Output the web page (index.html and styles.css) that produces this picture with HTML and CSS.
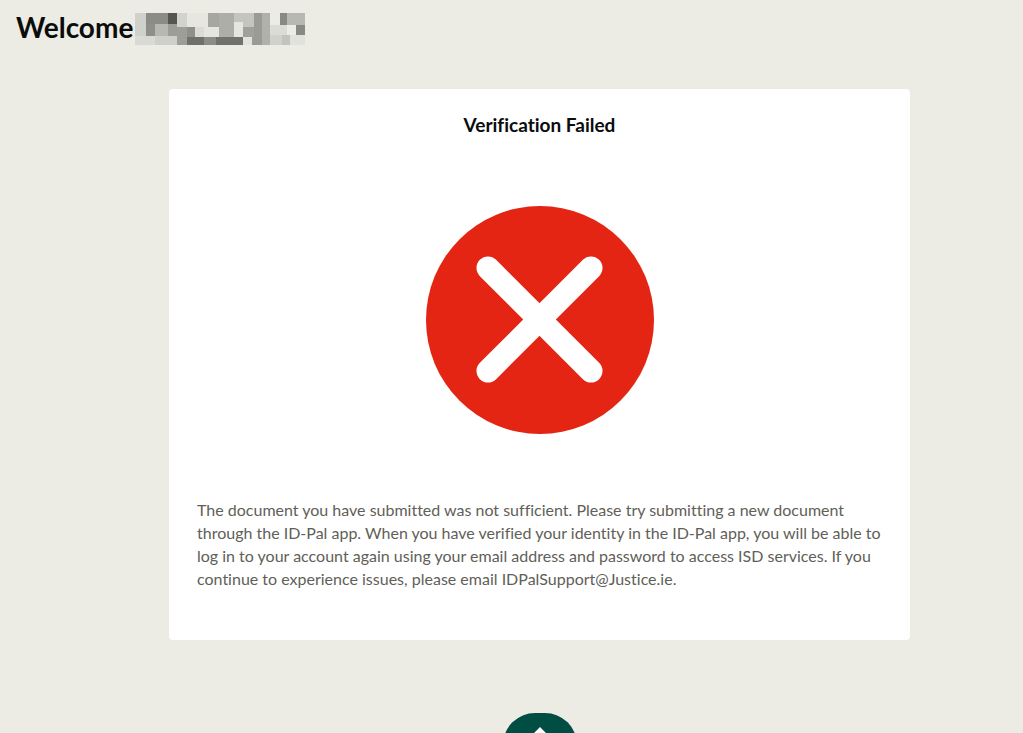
FILE: index.html
```
<!DOCTYPE html>
<html lang="en">
<head>
    <meta charset="UTF-8">
    <meta name="viewport" content="width=device-width, initial-scale=1.0">
    <title>Verification Failed</title>
    <link rel="stylesheet" href="styles.css">
</head>
<body>
    <header class="page-header">
        <h1>Welcome</h1>
        <svg class="hidden-name" width="170" height="32" viewBox="0 0 170 32" shape-rendering="crispEdges" role="img" aria-label="Name hidden">
            <rect width="11" height="23" fill="#d1d1cc"/>
            <rect y="23" width="20" height="9" fill="#dadad5"/>
            <rect x="11" width="22" height="11" fill="#8b8c86"/>
            <rect x="33" width="9" height="11" fill="#555551"/>
            <rect x="11" y="11" width="9" height="12" fill="#8f8f89"/>
            <rect x="20" y="11" width="13" height="12" fill="#b7b8b2"/>
            <rect x="33" y="11" width="9" height="12" fill="#9d9d98"/>
            <rect x="20" y="23" width="22" height="9" fill="#cfcfca"/>
            <rect x="42" width="10" height="14" fill="#d3d3ce"/>
            <rect x="42" y="14" width="10" height="18" fill="#9d9e98"/>
            <rect x="52" width="21" height="14" fill="#e7e7e0"/>
            <rect x="52" y="14" width="8" height="10" fill="#8f908a"/>
            <rect x="60" y="14" width="9" height="10" fill="#dcdcd6"/>
            <rect x="69" y="14" width="15" height="10" fill="#e6e6e0"/>
            <rect x="73" width="11" height="14" fill="#a6a7a1"/>
            <rect x="52" y="24" width="17" height="8" fill="#6f706a"/>
            <rect x="69" y="24" width="12" height="8" fill="#8c8d87"/>
            <rect x="84" width="15" height="24" fill="#adaea8"/>
            <rect x="99" width="9" height="9" fill="#c4c5c0"/>
            <rect x="99" y="9" width="9" height="15" fill="#e6e6e0"/>
            <rect x="81" y="24" width="27" height="8" fill="#71726c"/>
            <rect x="108" width="11" height="14" fill="#c4c5bf"/>
            <rect x="108" y="14" width="11" height="10" fill="#a0a19b"/>
            <rect x="108" y="24" width="9" height="8" fill="#e4e4de"/>
            <rect x="119" width="8" height="24" fill="#9a9b95"/>
            <rect x="117" y="24" width="10" height="8" fill="#9a9b95"/>
            <rect x="127" width="8" height="32" fill="#b0b1ab"/>
            <rect x="145" width="7" height="12" fill="#888982"/>
            <rect x="152" width="18" height="12" fill="#b7b8b2"/>
            <rect x="135" y="12" width="17" height="10" fill="#dcdcd7"/>
            <rect x="161" y="12" width="9" height="10" fill="#888982"/>
            <rect x="135" y="22" width="12" height="10" fill="#d0d1cb"/>
            <rect x="147" y="22" width="8" height="10" fill="#c3c4be"/>
            <rect x="155" y="22" width="15" height="10" fill="#e2e2dc"/>
        </svg>
    </header>

    <main class="content">
        <section class="card">
            <h2>Verification Failed</h2>
            <svg class="failed-icon" viewBox="0 0 228 228" aria-hidden="true">
                <circle cx="114" cy="114" r="114" fill="#e52514"/>
                <path d="M62 62L165 165M165 62L62 165" stroke="#fff" stroke-width="23" stroke-linecap="round"/>
            </svg>
            <p>The document you have submitted was not sufficient. Please try submitting a new document through the ID-Pal app. When you have verified your identity in the ID-Pal app, you will be able to log in to your account again using your email address and password to access ISD services. If you continue to experience issues, please email IDPalSupport@Justice.ie.</p>
        </section>

        <button type="button" class="back-to-top" aria-label="Back to top">
            <svg width="28" height="36" viewBox="0 0 28 36" aria-hidden="true">
                <path d="M14 0L28 14L24 18L17 11V36H11V11L4 18L0 14Z" fill="#fff"/>
            </svg>
        </button>
    </main>
</body>
</html>
```

FILE: styles.css
```
* {
    box-sizing: border-box;
}
body {
    margin: 0;
    height: 100vh;
    overflow: hidden;
    background-color: #ecece4;
    color: #0b0c0c;
    font-family: Lato, "Liberation Sans", sans-serif;
    font-variant-ligatures: none;
}
.page-header {
    display: flex;
    align-items: flex-end;
    gap: 2px;
    padding: 10px 16px 13px;
}
h1 {
    margin: 0;
    padding-bottom: 1px;
    font-size: 28px;
    line-height: 34px;
}
.content {
    display: flex;
    flex-direction: column;
    align-items: center;
    gap: 73px;
    padding: 31px 0 32px 56px;
}
.card {
    width: 100%;
    max-width: 741px;
    padding: 23px 28px 50px;
    background-color: #fff;
    border-radius: 4px;
}
h2 {
    margin: 0;
    font-size: 19px;
    line-height: 26px;
    text-align: center;
}
.failed-icon {
    display: block;
    width: 228px;
    margin: 68px auto 64px;
}
.card p {
    margin: 0;
    color: #5f6058;
    font-size: 16px;
    line-height: 23px;
}
.back-to-top {
    flex: none;
    width: 74px;
    height: 64px;
    padding: 14px 0;
    border: none;
    border-radius: 32px;
    background-color: #004d44;
    cursor: pointer;
}
.back-to-top svg {
    display: block;
    margin: 0 auto;
}
```
